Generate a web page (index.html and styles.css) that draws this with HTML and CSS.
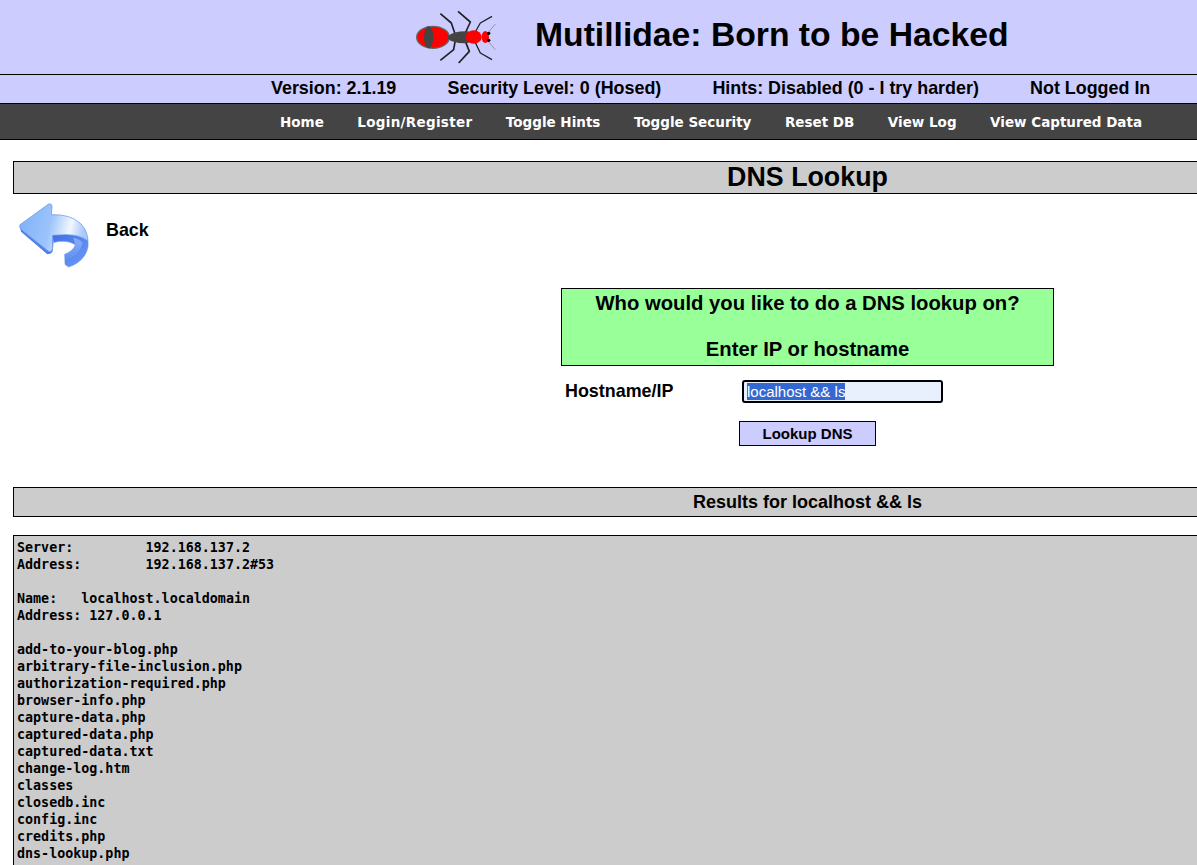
FILE: index.html
```html
<!DOCTYPE html>
<html lang="en">
<head>
<meta charset="utf-8">
<title>Mutillidae: Born to be Hacked</title>
<link rel="stylesheet" href="styles.css">
</head>
<body>
<div class="page">
  <header class="masthead">
    <svg class="ant" viewBox="0 0 264 174" width="88" height="58" aria-hidden="true">
      <g fill="none" stroke="#222" stroke-width="5" stroke-linejoin="round">
        <path d="M130 80 L118 45 L85 17"/>
        <path d="M160 75 L175 42 L138 10"/>
        <path d="M188 75 L205 45 L240 25" stroke-width="4"/>
        <path d="M130 96 L125 125 L85 157"/>
        <path d="M160 100 L172 130 L140 165"/>
        <path d="M188 100 L205 135 L240 155" stroke-width="4"/>
      </g>
      <g fill="none" stroke="#777" stroke-width="2">
        <path d="M230 72 L250 48"/>
        <path d="M230 102 L250 125"/>
      </g>
      <ellipse cx="63" cy="88" rx="51" ry="35" fill="#666"/>
      <ellipse cx="63" cy="88" rx="47" ry="31" fill="#f00"/>
      <ellipse cx="50" cy="88" rx="14" ry="33" fill="#444"/>
      <path d="M108 85 Q125 68 170 70 L170 105 Q125 108 108 92 Z" fill="#444"/>
      <ellipse cx="185" cy="87" rx="24" ry="20" fill="#f00"/>
      <ellipse cx="220" cy="87" rx="11" ry="18" fill="#f00"/>
      <circle cx="230" cy="76" r="5" fill="#000"/>
      <circle cx="230" cy="97" r="5" fill="#000"/>
    </svg>
    <h1 class="site-title">Mutillidae: Born to be Hacked</h1>
  </header>
  <div class="status-bar">
    <span>Version: 2.1.19</span>
    <span>Security Level: 0 (Hosed)</span>
    <span>Hints: Disabled (0 - I try harder)</span>
    <span>Not Logged In</span>
  </div>
  <nav class="main-nav">
    <a href="#">Home</a>
    <a class="wide" href="#">Login/Register</a>
    <a href="#">Toggle Hints</a>
    <a href="#">Toggle Security</a>
    <a href="#">Reset DB</a>
    <a href="#">View Log</a>
    <a href="#">View Captured Data</a>
  </nav>
  <main class="content">
    <h2 class="page-title">DNS Lookup</h2>
    <a class="back" href="#">
      <svg class="back-icon" viewBox="0 0 234 216" width="78" height="77" preserveAspectRatio="none" aria-hidden="true">
        <defs>
          <linearGradient id="face" x1="0" y1="0" x2="1" y2="0.15">
            <stop offset="0" stop-color="#7db0f8"/>
            <stop offset="0.5" stop-color="#9cc4fb"/>
            <stop offset="0.8" stop-color="#f2f7ff"/>
            <stop offset="1" stop-color="#a9c8fb"/>
          </linearGradient>
          <linearGradient id="side" x1="0" y1="0" x2="1" y2="1">
            <stop offset="0" stop-color="#3f6fe6"/>
            <stop offset="1" stop-color="#6f9cf6"/>
          </linearGradient>
          <linearGradient id="band" x1="0" y1="0" x2="0" y2="1">
            <stop offset="0" stop-color="#9dc0fa"/>
            <stop offset="1" stop-color="#5f8ff0"/>
          </linearGradient>
        </defs>
        <path d="M12 76 L15 92 L94 155 Q106 155 110 146 L112 125 L110 100 Z" fill="#4f80ea"/>
        <path d="M108 100 Q170 92 214 112 Q222 135 205 160 Q188 182 158 191 L147 184 L146 155 Q172 146 178 128 Q150 113 113 122 Z" fill="url(#side)" stroke="#6a97f2" stroke-width="1.500" stroke-linejoin="round"/>
        <path d="M178 128 Q172 146 146 155 L148 172 Q190 160 200 122 Q190 112 172 108 Z" fill="url(#band)" opacity="0.700"/>
        <path d="M12 72 L98 14 Q108 12 108 22 L106 44 Q165 42 195 70 Q215 90 216 118 Q190 100 150 100 L110 102 L110 138 Q106 152 96 146 L18 88 Q8 80 12 72 Z" fill="url(#face)" stroke="#5f8fe8" stroke-width="2" stroke-linejoin="round"/>
      </svg>
      <span>Back</span>
    </a>
    <form class="lookup" onsubmit="return false">
      <div class="prompt">
        <p>Who would you like to do a DNS lookup on?</p>
        <p>Enter IP or hostname</p>
      </div>
      <div class="field">
        <label for="host">Hostname/IP</label>
        <input id="host" type="text" value="localhost &amp;&amp; ls">
      </div>
      <div class="actions"><button type="button">Lookup DNS</button></div>
    </form>
    <h3 class="results-title">Results for localhost &amp;&amp; ls</h3>
    <pre class="output">Server:		192.168.137.2
Address:	192.168.137.2#53

Name:	localhost.localdomain
Address: 127.0.0.1

add-to-your-blog.php
arbitrary-file-inclusion.php
authorization-required.php
browser-info.php
capture-data.php
captured-data.php
captured-data.txt
change-log.htm
classes
closedb.inc
config.inc
credits.php
dns-lookup.php
</pre>
  </main>
</div>
<script src="script.js"></script>
</body>
</html>
```
FILE: styles.css
```css
html, body {
  margin: 0;
  padding: 0;
  height: 100%;
  overflow: hidden;
  background: #fff;
  color: #000;
  font-family: "Liberation Sans", Arial, sans-serif;
}
.page {
  width: 1615px;
}
.masthead {
  height: 74px;
  background: #ccccff;
  border-bottom: 1px solid #000;
  display: flex;
  align-items: center;
  padding-left: 412px;
}
.ant {
  flex: none;
}
.site-title {
  margin: 0 0 6px 35px;
  font-size: 33.700px;
  font-weight: 700;
}
.status-bar {
  padding: 0 0 2px 271px;
  box-sizing: border-box;
  height: 29px;
  background: #ccccff;
  border-bottom: 1px solid #000;
  display: flex;
  align-items: center;
  gap: 51.200px;
  font-size: 17.900px;
  font-weight: 700;
}
.main-nav {
  box-sizing: border-box;
  height: 36px;
  padding-left: 280px;
  background: #444;
  border-bottom: 1px solid #000;
  display: flex;
  align-items: center;
  gap: 33.500px;
}
.main-nav a {
  color: #fff;
  text-decoration: none;
  font-family: "DejaVu Sans", Verdana, sans-serif;
  font-size: 13.500px;
  font-weight: 700;
}
.main-nav a.wide {
  letter-spacing: 0.300px;
}
.content {
  padding: 21px 13px 0;
}
.page-title {
  margin: 0;
  height: 31px;
  line-height: 30px;
  background: #ccc;
  border: 1px solid #000;
  text-align: center;
  font-size: 26.800px;
  font-weight: 700;
}
.back {
  display: flex;
  align-items: flex-start;
  gap: 12px;
  height: 94px;
  padding: 5px 0 0 3px;
  box-sizing: border-box;
  color: #000;
  text-decoration: none;
  font-size: 17.900px;
  font-weight: 700;
}
.back span {
  padding-top: 21px;
}
.lookup {
  width: 493px;
  margin: 0 auto;
}
.prompt {
  height: 76px;
  background: #99ff99;
  border: 1px solid #000;
  text-align: center;
  font-size: 20.250px;
  font-weight: 700;
}
.prompt p {
  margin: 0;
  line-height: 23px;
  padding-top: 3px;
  height: 43px;
}
.field {
  display: grid;
  grid-template-columns: 181px 201px;
  align-items: center;
  margin-top: 14px;
  height: 23px;
}
.field label {
  padding-left: 4px;
  font-size: 17.900px;
  font-weight: 700;
}
.field input {
  box-sizing: border-box;
  width: 201px;
  height: 23px;
  padding: 0 3px;
  border: 2px solid #000;
  border-radius: 3px;
  background: #e8f0fe;
  outline: none;
  font-family: "Liberation Sans", Arial, sans-serif;
  font-size: 15px;
  color: #000;
}
.field input::selection {
  background: #3367d1;
  color: #fff;
}
.actions {
  margin-top: 18px;
  text-align: center;
}
.actions button {
  width: 137px;
  height: 25px;
  padding: 0;
  background: #ccccff;
  border: 1px solid #000;
  font-family: "Liberation Sans", Arial, sans-serif;
  font-size: 15px;
  font-weight: 700;
  color: #000;
}
.results-title {
  margin: 41px 0 0;
  height: 28px;
  line-height: 28px;
  background: #ccc;
  border: 1px solid #000;
  text-align: center;
  font-size: 18px;
  font-weight: 700;
}
.output {
  margin: 18px 0 0;
  padding: 3px 3px 200px;
  background: #ccc;
  border: 1px solid #000;
  font-family: "DejaVu Sans Mono", Consolas, monospace;
  font-size: 13.350px;
  font-weight: 700;
  line-height: 17px;
  tab-size: 8;
}
```
FILE: script.js
```js
var host = document.getElementById('host');
host.focus();
host.select();
```
